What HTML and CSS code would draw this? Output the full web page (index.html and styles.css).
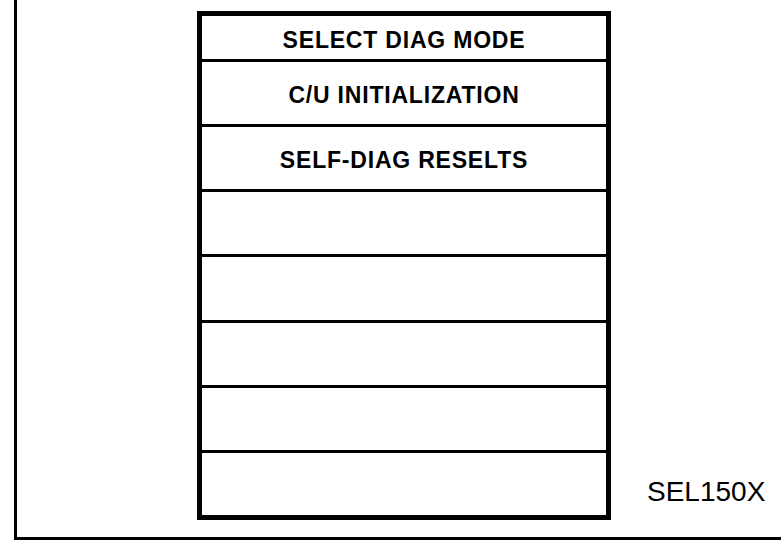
FILE: index.html
```html
<!DOCTYPE html>
<html>
<head>
    <meta charset="UTF-8">
    <title>Select Diag Mode</title>
    <link rel="stylesheet" href="styles.css">
</head>
<body>
    <div class="sheet">
        <div class="menu">
            <div class="menu-row">SELECT DIAG MODE</div>
            <div class="menu-row">C/U INITIALIZATION</div>
            <div class="menu-row">SELF-DIAG RESELTS</div>
            <div class="menu-row"></div>
            <div class="menu-row"></div>
            <div class="menu-row"></div>
            <div class="menu-row"></div>
            <div class="menu-row"></div>
        </div>
        <div class="fig-code">SEL150X</div>
    </div>
</body>
</html>
```

FILE: styles.css
```css
body {
    margin: 0;
    background: #fff;
    color: #000;
    font-family: "Liberation Sans", Arial, sans-serif;
}

.sheet {
    box-sizing: border-box;
    display: flex;
    align-items: flex-start;
    margin-left: 14px;
    width: 767px;
    height: 540px;
    padding: 11px 0 17px 180px;
    border-left: 3px solid #000;
    border-bottom: 3px solid #000;
}

.menu {
    box-sizing: border-box;
    display: grid;
    grid-template-rows: 43px repeat(7, 1fr);
    width: 414px;
    height: 509px;
    border: 5px solid #000;
    border-left-width: 5px;
}
.menu-row {
    display: flex;
    align-items: center;
    justify-content: center;
    padding-top: 5px;
    font-size: 23px;
    font-weight: bold;
    letter-spacing: 0.8px;
}
.menu-row + .menu-row {
    border-top: 3px solid #000;
}

.fig-code {
    align-self: flex-end;
    margin: 0 0 14px 36px;
    font-size: 28px;
    line-height: 28px;
}
```
